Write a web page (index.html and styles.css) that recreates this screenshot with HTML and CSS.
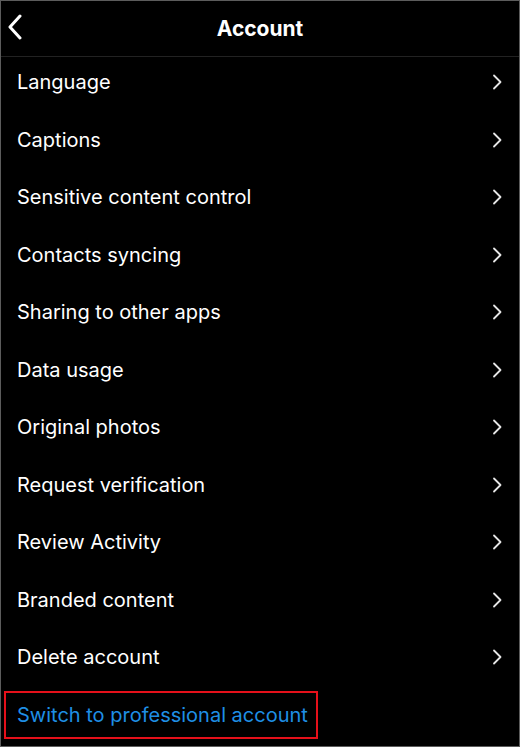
FILE: index.html
```html
<!DOCTYPE html>
<html lang="en">
<head>
  <meta charset="UTF-8" />
  <meta name="viewport" content="width=device-width, initial-scale=1.0"/>
  <title>Account</title>
  <link rel="stylesheet" href="styles.css">
</head>
<body>
  <div id="screen">
    <div id="kopf">
      <span class="zurueck">
        <svg width="16" height="26" viewBox="0 0 16 26"><path d="M13 2 L3 13 L13 24" fill="none" stroke="#fff" stroke-width="3" stroke-linecap="round" stroke-linejoin="round"/></svg>
      </span>
      <h1>Account</h1>
    </div>

    <ul id="liste">
      <li>Language <svg class="pfeil" width="10" height="16" viewBox="0 0 10 16"><path d="M2 1.5 L8.5 8 L2 14.5"/></svg></li>
      <li>Captions <svg class="pfeil" width="10" height="16" viewBox="0 0 10 16"><path d="M2 1.5 L8.5 8 L2 14.5"/></svg></li>
      <li>Sensitive content control <svg class="pfeil" width="10" height="16" viewBox="0 0 10 16"><path d="M2 1.5 L8.5 8 L2 14.5"/></svg></li>
      <li>Contacts syncing <svg class="pfeil" width="10" height="16" viewBox="0 0 10 16"><path d="M2 1.5 L8.5 8 L2 14.5"/></svg></li>
      <li>Sharing to other apps <svg class="pfeil" width="10" height="16" viewBox="0 0 10 16"><path d="M2 1.5 L8.5 8 L2 14.5"/></svg></li>
      <li>Data usage <svg class="pfeil" width="10" height="16" viewBox="0 0 10 16"><path d="M2 1.5 L8.5 8 L2 14.5"/></svg></li>
      <li>Original photos <svg class="pfeil" width="10" height="16" viewBox="0 0 10 16"><path d="M2 1.5 L8.5 8 L2 14.5"/></svg></li>
      <li>Request verification <svg class="pfeil" width="10" height="16" viewBox="0 0 10 16"><path d="M2 1.5 L8.5 8 L2 14.5"/></svg></li>
      <li>Review Activity <svg class="pfeil" width="10" height="16" viewBox="0 0 10 16"><path d="M2 1.5 L8.5 8 L2 14.5"/></svg></li>
      <li>Branded content <svg class="pfeil" width="10" height="16" viewBox="0 0 10 16"><path d="M2 1.5 L8.5 8 L2 14.5"/></svg></li>
      <li>Delete account <svg class="pfeil" width="10" height="16" viewBox="0 0 10 16"><path d="M2 1.5 L8.5 8 L2 14.5"/></svg></li>
      <li class="blau"><span class="markiert">Switch to professional account</span></li>
    </ul>
  </div>
</body>
</html>
```

FILE: styles.css
```css
body {
  margin: 0;
  background: #000;
  color: #fff;
  font-family: Inter, "Liberation Sans", sans-serif;
}

#screen {
  width: 520px;
  height: 747px;
  box-sizing: border-box;
  border: 1px solid #5c5c5c;
  overflow: hidden;
}

#kopf {
  position: relative;
  height: 55px;
  border-bottom: 1px solid #222;
  display: flex;
  align-items: center;
  justify-content: center;
}

#kopf h1 {
  margin: 0;
  font-size: 21px;
  font-weight: 700;
}

.zurueck {
  position: absolute;
  left: 6px;
  top: 13px;
  display: flex;
}

#liste {
  list-style: none;
  margin: 0;
  padding: 0;
}

#liste li {
  height: 57.5px;
  box-sizing: border-box;
  padding: 0 16px 7.5px 16px;
  display: flex;
  align-items: center;
  justify-content: space-between;
  font-size: 20px;
  line-height: 50px;
}

/* Pfeil rechts */
.pfeil {
  margin-right: 1px;
}

.pfeil path {
  fill: none;
  stroke: #e6e6e6;
  stroke-width: 1.8;
  stroke-linecap: round;
  stroke-linejoin: round;
}

#liste li.blau {
  color: #1f8fe5;
  padding-left: 3px;
}

.markiert {
  border: 2px solid #e5101a;
  line-height: 44px;
  padding: 0 8px 0 11px;
}
```
